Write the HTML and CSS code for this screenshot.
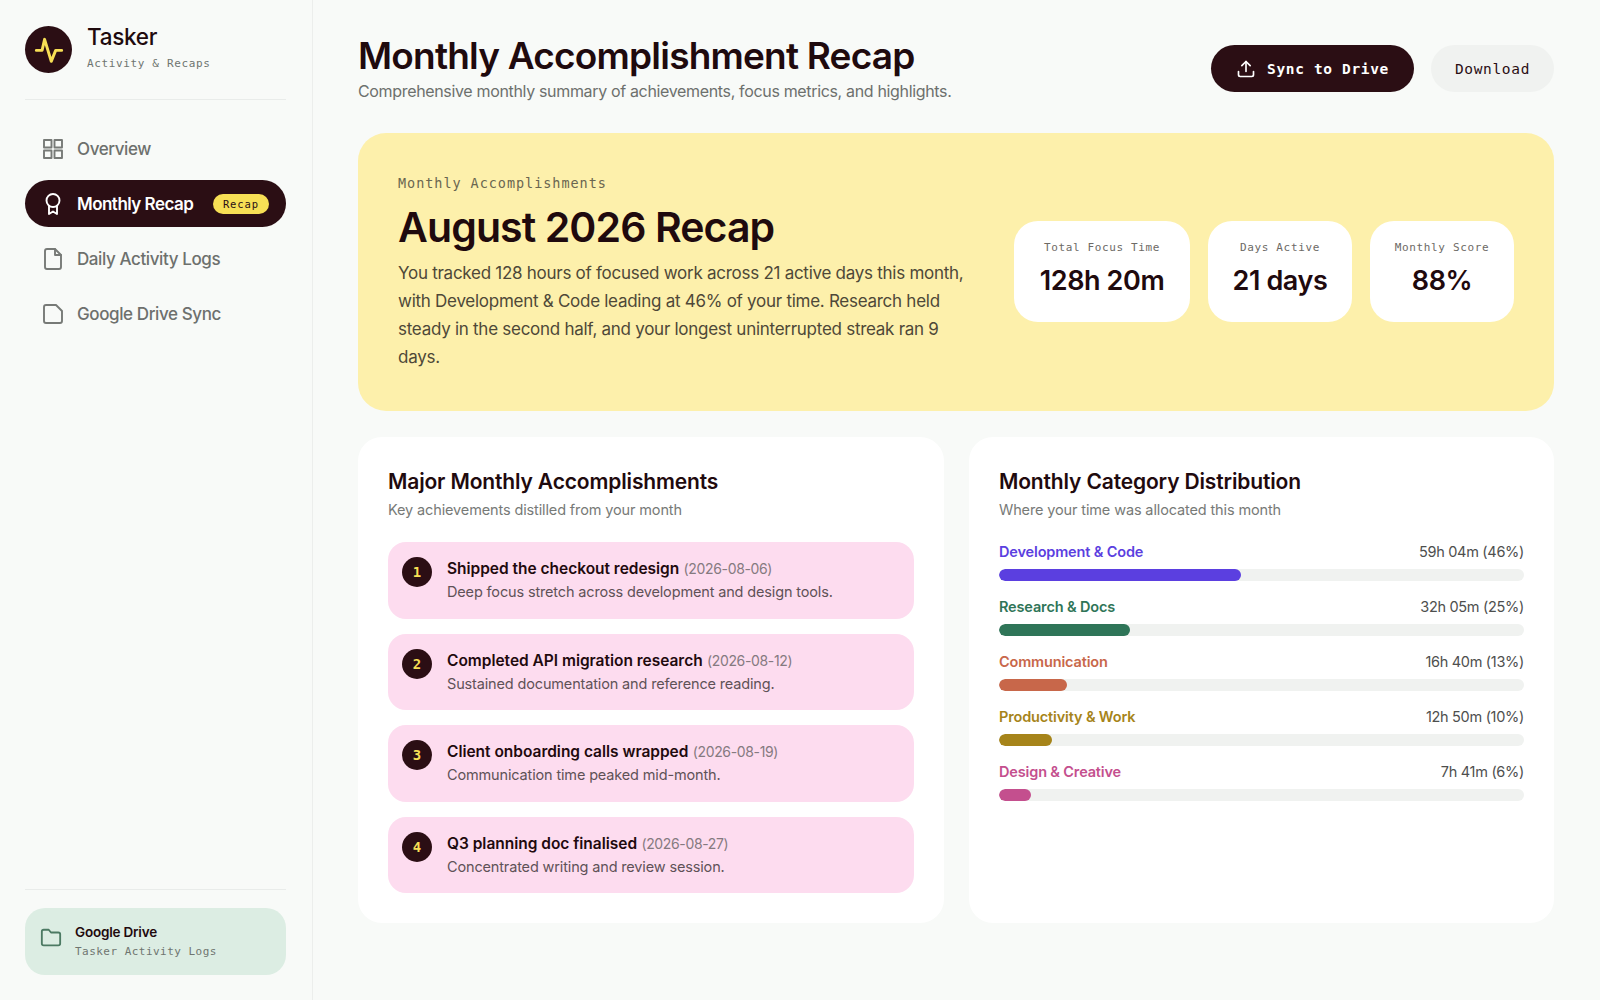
FILE: index.html
```html
<!DOCTYPE html>
<html lang="en">
<head>
<meta charset="utf-8">
<title>Tasker - Monthly Recap</title>
<link rel="stylesheet" href="styles.css">
</head>
<body>
<div class="app">
  <aside class="sidebar">
    <div class="brand">
      <div class="logo">
        <svg viewBox="0 0 24 24" class="logo-icon"><path d="M2.5 12.3h4.3L8.7 4l5 16.500 3.300-8.200h4.500"/></svg>
      </div>
      <div class="brand-text">
        <div class="brand-name">Tasker</div>
        <div class="brand-sub">Activity &amp; Recaps</div>
      </div>
    </div>
    <nav class="nav">
      <a class="nav-item">
        <svg viewBox="0 0 24 24" class="nav-icon"><rect x="3" y="3" width="7.500" height="7.500"/><rect x="13.500" y="3" width="7.500" height="7.500"/><rect x="3" y="13.500" width="7.500" height="7.500"/><rect x="13.500" y="13.500" width="7.500" height="7.500"/></svg>
        <span>Overview</span>
      </a>
      <a class="nav-item active">
        <svg viewBox="0 0 24 24" class="nav-icon"><circle cx="12" cy="8.500" r="6.500"/><path d="M8 14v8l4-2.500 4 2.500v-8"/></svg>
        <span>Monthly Recap</span>
        <span class="badge">Recap</span>
      </a>
      <a class="nav-item">
        <svg viewBox="0 0 24 24" class="nav-icon"><path d="M14 2H6a2 2 0 0 0-2 2v16a2 2 0 0 0 2 2h12a2 2 0 0 0 2-2V8z"/><path d="M14 2v6h6"/></svg>
        <span>Daily Activity Logs</span>
      </a>
      <a class="nav-item">
        <svg viewBox="0 0 24 24" class="nav-icon"><path d="M15 3H5a2 2 0 0 0-2 2v14a2 2 0 0 0 2 2h14a2 2 0 0 0 2-2V9z"/></svg>
        <span>Google Drive Sync</span>
      </a>
    </nav>
    <div class="side-foot">
      <div class="drive-card">
        <svg viewBox="0 0 24 24" class="drive-icon"><path d="M20 20a2 2 0 0 0 2-2V8a2 2 0 0 0-2-2h-8l-2.500-3H4a2 2 0 0 0-2 2v13a2 2 0 0 0 2 2z"/></svg>
        <div>
          <div class="drive-name">Google Drive</div>
          <div class="drive-sub">Tasker Activity Logs</div>
        </div>
      </div>
    </div>
  </aside>

  <main class="main">
    <header class="top">
      <div>
        <h1 class="page-title">Monthly Accomplishment Recap</h1>
        <p class="page-sub">Comprehensive monthly summary of achievements, focus metrics, and highlights.</p>
      </div>
      <div class="actions">
        <button class="btn btn-dark">
          <svg viewBox="0 0 24 24" class="btn-icon"><path d="M21 15v4a2 2 0 0 1-2 2H5a2 2 0 0 1-2-2v-4"/><path d="M17 8l-5-5-5 5"/><path d="M12 3v12"/></svg>
          Sync to Drive
        </button>
        <button class="btn btn-light">Download</button>
      </div>
    </header>

    <section class="hero">
      <div class="hero-copy">
        <div class="eyebrow">Monthly Accomplishments</div>
        <h2 class="hero-title">August 2026 Recap</h2>
        <p class="hero-text">You tracked 128 hours of focused work across 21 active days this month, with Development &amp; Code leading at 46% of your time. Research held steady in the second half, and your longest uninterrupted streak ran 9 days.</p>
      </div>
      <div class="stats">
        <div class="stat stat-wide"><div class="stat-label">Total Focus Time</div><div class="stat-value">128h 20m</div></div>
        <div class="stat"><div class="stat-label">Days Active</div><div class="stat-value">21 days</div></div>
        <div class="stat"><div class="stat-label">Monthly Score</div><div class="stat-value">88%</div></div>
      </div>
    </section>

    <div class="columns">
      <section class="card">
        <h3 class="card-title">Major Monthly Accomplishments</h3>
        <p class="card-sub">Key achievements distilled from your month</p>
        <div class="items">
          <div class="item"><div class="num">1</div><div><div class="item-head"><strong>Shipped the checkout redesign</strong> <span class="date">(2026-08-06)</span></div><div class="item-desc">Deep focus stretch across development and design tools.</div></div></div>
          <div class="item"><div class="num">2</div><div><div class="item-head"><strong>Completed API migration research</strong> <span class="date">(2026-08-12)</span></div><div class="item-desc">Sustained documentation and reference reading.</div></div></div>
          <div class="item"><div class="num">3</div><div><div class="item-head"><strong>Client onboarding calls wrapped</strong> <span class="date">(2026-08-19)</span></div><div class="item-desc">Communication time peaked mid-month.</div></div></div>
          <div class="item"><div class="num">4</div><div><div class="item-head"><strong>Q3 planning doc finalised</strong> <span class="date">(2026-08-27)</span></div><div class="item-desc">Concentrated writing and review session.</div></div></div>
        </div>
      </section>

      <section class="card">
        <h3 class="card-title">Monthly Category Distribution</h3>
        <p class="card-sub">Where your time was allocated this month</p>
        <div class="bars">
          <div class="bar-row"><div class="bar-head"><span class="bar-name c-purple">Development &amp; Code</span><span class="bar-val">59h 04m (46%)</span></div><div class="track"><div class="fill f-purple" style="width:46%"></div></div></div>
          <div class="bar-row"><div class="bar-head"><span class="bar-name c-green">Research &amp; Docs</span><span class="bar-val">32h 05m (25%)</span></div><div class="track"><div class="fill f-green" style="width:25%"></div></div></div>
          <div class="bar-row"><div class="bar-head"><span class="bar-name c-orange">Communication</span><span class="bar-val">16h 40m (13%)</span></div><div class="track"><div class="fill f-orange" style="width:13%"></div></div></div>
          <div class="bar-row"><div class="bar-head"><span class="bar-name c-gold">Productivity &amp; Work</span><span class="bar-val">12h 50m (10%)</span></div><div class="track"><div class="fill f-gold" style="width:10%"></div></div></div>
          <div class="bar-row"><div class="bar-head"><span class="bar-name c-pink">Design &amp; Creative</span><span class="bar-val">7h 41m (6%)</span></div><div class="track"><div class="fill f-pink" style="width:6%"></div></div></div>
        </div>
      </section>
    </div>
  </main>
</div>
</body>
</html>
```
FILE: styles.css
```css
* { box-sizing: border-box; }
html, body { margin: 0; height: 100%; }
body {
  background: #f8faf8;
  color: #2b0e14;
  font-family: "Inter", "Liberation Sans", sans-serif;
  overflow: hidden;
}
h1, h2, h3, p { margin: 0; }
.app { display: flex; height: 1000px; }

.sidebar {
  width: 313px;
  flex: none;
  border-right: 1px solid #eceeec;
  padding: 26px 26px 25px 25px;
  display: flex;
  flex-direction: column;
}
.brand {
  display: flex;
  align-items: center;
  gap: 15px;
  padding-bottom: 26px;
  border-bottom: 1px solid #e9ecea;
  margin-bottom: 25px;
}
.logo {
  width: 47px; height: 47px;
  border-radius: 50%;
  background: #2b0e14;
  display: flex; align-items: center; justify-content: center;
}
.logo-icon { width: 32px; height: 32px; fill: none; stroke: #f7df55; stroke-width: 2.200; stroke-linecap: round; stroke-linejoin: round; }
.brand-name { font-size: 22.500px; font-weight: 500; line-height: 26px; letter-spacing: -0.3px; color: #1f0a0e; margin-top: -4px; }
.brand-sub { font-family: "DejaVu Sans Mono", monospace; font-size: 11px; line-height: 16px; color: #6f7570; margin-top: 6px; letter-spacing: 0.640px; }

.nav { display: flex; flex-direction: column; gap: 8px; }
.nav-item {
  height: 47px;
  display: flex;
  align-items: center;
  gap: 12px;
  padding: 0 17px 0 16px;
  border-radius: 24px;
  font-size: 17px;
  font-weight: 500;
  letter-spacing: -0.4px;
  color: #6d706d;
}
.nav-icon { width: 24px; height: 24px; flex: none; fill: none; stroke: #777a77; stroke-width: 1.900; stroke-linecap: round; stroke-linejoin: round; }
.nav-item.active { background: #2b0e14; color: #fff; font-weight: 600; letter-spacing: -0.520px; }
.nav-item.active .nav-icon { stroke: #fff; }
.badge {
  margin-left: auto;
  background: #f7df55;
  color: #2b0e14;
  font-family: "DejaVu Sans Mono", monospace;
  font-size: 10.500px;
  font-weight: 400;
  letter-spacing: 0.900px;
  height: 20px;
  line-height: 20px;
  padding: 0 10px;
  border-radius: 10px;
}

.side-foot { margin-top: auto; border-top: 1px solid #e9ecea; padding-top: 18px; }
.drive-card {
  height: 67px;
  background: #dcede3;
  border-radius: 20px;
  display: flex;
  align-items: center;
  gap: 13px;
  padding: 0 14px 0 15px;
}
.drive-icon { width: 22px; height: 22px; flex: none; margin-top: -7px; fill: none; stroke: #4c7a63; stroke-width: 2; stroke-linecap: round; stroke-linejoin: round; }
.drive-name { font-size: 13.500px; font-weight: 600; line-height: 17px; letter-spacing: -0.2px; color: #1f0a0e; }
.drive-sub { font-family: "DejaVu Sans Mono", monospace; font-size: 11px; line-height: 15px; margin-top: 3px; color: #6f7570; letter-spacing: 0.470px; }

.main { flex: 1; min-width: 0; padding: 36px 46px 0 45px; }
.top { display: flex; justify-content: space-between; align-items: center; height: 65px; margin-bottom: 32px; }
.page-title { font-size: 37px; line-height: 40px; font-weight: 600; letter-spacing: -0.8px; color: #1f0a0e; }
.page-sub { font-size: 16px; line-height: 22px; letter-spacing: -0.340px; color: #6d706d; margin-top: 4px; }
.actions { display: flex; gap: 17px; }
.btn {
  height: 47px;
  border: 0;
  border-radius: 24px;
  font-family: "DejaVu Sans Mono", monospace;
  font-size: 14.500px;
  letter-spacing: 0.650px;
  display: flex;
  align-items: center;
  justify-content: center;
}
.btn-dark { width: 203px; gap: 11px; background: #2b0e14; color: #fff; font-weight: 700; }
.btn-light { width: 123px; background: #f0f2f0; color: #2b0e14; }
.btn-icon { width: 20px; height: 20px; fill: none; stroke: #fff; stroke-width: 2; stroke-linecap: round; stroke-linejoin: round; }

.hero {
  height: 278px;
  background: #fdf0ab;
  border-radius: 28px;
  padding: 40px;
  display: flex;
  justify-content: space-between;
  align-items: center;
  margin-bottom: 26px;
}
.hero-copy { width: 572px; }
.eyebrow { font-family: "DejaVu Sans Mono", monospace; font-size: 13.500px; line-height: 20px; letter-spacing: 0.950px; color: #6a6650; }
.hero-title { font-size: 41px; line-height: 50px; font-weight: 600; letter-spacing: -0.9px; color: #1f0a0e; margin-top: 9px; margin-bottom: 7px; }
.hero-text { font-size: 17px; line-height: 28px; letter-spacing: -0.270px; color: #4e4838; }
.stats { display: flex; gap: 18px; margin-top: -1px; }
.stat {
  width: 144px;
  height: 101px;
  background: #fff;
  border-radius: 24px;
  padding-top: 19px;
  text-align: center;
}
.stat-wide { width: 176px; }
.stat-label { font-family: "DejaVu Sans Mono", monospace; font-size: 11px; line-height: 16px; letter-spacing: 0.640px; color: #6d6a66; }
.stat-value { font-size: 27px; line-height: 34px; font-weight: 600; letter-spacing: -0.400px; color: #1f0a0e; margin-top: 8px; }

.columns { display: grid; grid-template-columns: 586px 1fr; gap: 25px; height: 486px; }
.card { background: #fff; border-radius: 24px; padding: 32px 30px 30px; }
.card-title { font-size: 21px; line-height: 26px; font-weight: 600; letter-spacing: -0.150px; color: #1f0a0e; }
.card-sub { font-size: 14.500px; line-height: 20px; letter-spacing: -0.130px; color: #777a77; margin-top: 5px; }

.items { display: flex; flex-direction: column; gap: 15px; margin-top: 22px; }
.item {
  height: 76.500px;
  background: #fddcef;
  border-radius: 18px;
  display: flex;
  gap: 15px;
  padding: 15px 14px 0;
}
.num {
  width: 30px; height: 30px;
  flex: none;
  border-radius: 50%;
  background: #2b0e14;
  color: #f7df55;
  font-family: "DejaVu Sans Mono", monospace;
  font-size: 14px;
  font-weight: 700;
  display: flex; align-items: center; justify-content: center;
}
.item-head { font-size: 15.500px; line-height: 24px; letter-spacing: -0.020px; }
.item-head strong { font-weight: 600; color: #1f0a0e; }
.date { font-size: 14px; letter-spacing: -0.350px; color: #857a80; }
.item-desc { font-size: 14.500px; line-height: 22px; letter-spacing: -0.150px; color: #5f5257; }

.bars { display: flex; flex-direction: column; gap: 16px; margin-top: 22px; }
.bar-head { display: flex; justify-content: space-between; font-size: 14.500px; line-height: 20px; margin-bottom: 7px; }
.bar-name { font-weight: 600; letter-spacing: -0.150px; }
.bar-val { color: #4e4f4e; letter-spacing: -0.300px; }
.track { height: 12px; border-radius: 6px; background: #f0f2f0; overflow: hidden; }
.fill { height: 100%; border-radius: 6px; }
.c-purple { color: #5b3fe0; } .f-purple { background: #5b3fe0; }
.c-green { color: #2f7558; } .f-green { background: #2f7558; }
.c-orange { color: #c8674a; } .f-orange { background: #c8674a; }
.c-gold { color: #a6841a; } .f-gold { background: #a6841a; }
.c-pink { color: #c44f8e; } .f-pink { background: #c44f8e; }
```
